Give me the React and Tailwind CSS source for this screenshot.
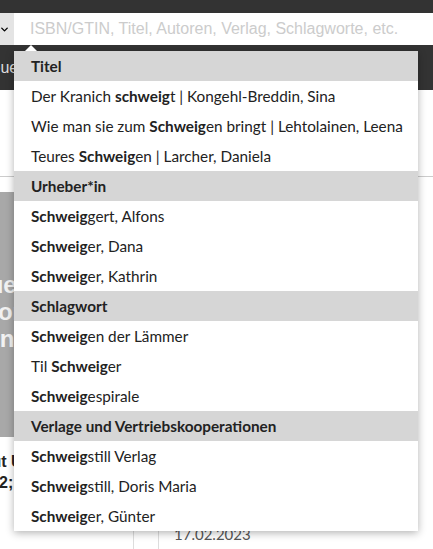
import { ChevronDown } from 'lucide-react';

const groups = [
  {
    title: 'Titel',
    items: [
      ['Der Kranich ', 'schweig', 't | Kongehl-Breddin, Sina'],
      ['Wie man sie zum ', 'Schweig', 'en bringt | Lehtolainen, Leena'],
      ['Teures ', 'Schweig', 'en | Larcher, Daniela'],
    ],
  },
  {
    title: 'Urheber*in',
    items: [
      ['', 'Schweig', 'gert, Alfons'],
      ['', 'Schweig', 'er, Dana'],
      ['', 'Schweig', 'er, Kathrin'],
    ],
  },
  {
    title: 'Schlagwort',
    items: [
      ['', 'Schweig', 'en der Lämmer'],
      ['Til ', 'Schweig', 'er'],
      ['', 'Schweig', 'espirale'],
    ],
  },
  {
    title: 'Verlage und Vertriebskooperationen',
    items: [
      ['', 'Schweig', 'still Verlag'],
      ['', 'Schweig', 'still, Doris Maria'],
      ['', 'Schweig', 'er, Günter'],
    ],
  },
];

function Suggestions() {
  return (
    <div className="absolute left-[14px] top-[51px] w-[404px] bg-white shadow-[0_2px_8px_rgba(0,0,0,0.3)] font-['Lato',sans-serif] text-[15.3px] text-[#222]">
      <div className="absolute -top-[6px] left-[11px] w-0 h-0 border-x-[6px] border-x-transparent border-b-[6px] border-b-white" />
      {groups.map((g) => (
        <div key={g.title}>
          <div className="h-[30px] leading-[30px] pl-[17px] bg-[#d6d6d6] font-bold">{g.title}</div>
          {g.items.map(([pre, hit, post], i) => (
            <div key={i} className="h-[30px] leading-[30px] pl-[17px] whitespace-pre">
              {pre}
              <b className="font-bold">{hit}</b>
              {post}
            </div>
          ))}
        </div>
      ))}
    </div>
  );
}

export default function App() {
  return (
    <div className="relative w-[433px] h-[549px] overflow-hidden bg-white font-['Liberation_Sans',sans-serif]">
      <div className="h-[13px] bg-[#333]" />
      <div className="h-[32px] flex">
        <div className="w-[14px] bg-[#e4e4e4] flex items-center justify-start">
          <ChevronDown className="w-[11px] h-[11px] -ml-[1px]" strokeWidth={3} />
        </div>
        <div className="flex-1 flex items-center pl-[16px] text-[16px] text-[#ccc] whitespace-nowrap">
          ISBN/GTIN, Titel, Autoren, Verlag, Schlagworte, etc.
        </div>
      </div>
      <div className="h-[45px] bg-[#333] flex items-center text-[#ddd] text-[16px] whitespace-nowrap">
        <span className="-ml-[20px]">Neuerscheinungen</span>
      </div>
      <div className="h-[87px] border-b border-[#ccc]" />
      <div className="pt-[15px] flex">
        <div className="w-[200px] h-[245px] bg-[#a8a8a8] flex flex-col justify-end pb-[85px] text-[#f2f2f2] font-bold text-[24px] leading-[27px] whitespace-nowrap">
          <span className="-ml-[42px]">Neue</span>
          <span className="-ml-[15px]">Ton</span>
          <span className="-ml-[15px]">und</span>
        </div>
      </div>
      <div className="pt-[14px] text-[16px] leading-[21px] text-[#222] font-bold whitespace-nowrap">
        <div className="-ml-[21px]">Gut Unterwegs</div>
        <div className="-ml-[1px]">2; 15</div>
      </div>
      <div className="flex mt-[29px] h-[40px]">
        <div className="w-[133px]" />
        <div className="w-[25px] border-l border-[#ddd]" />
        <div className="border-l border-[#ddd] pl-[15px] pt-[1px] text-[15px] text-[#555] font-['Lato',sans-serif]">17.02.2023</div>
      </div>
      <Suggestions />
    </div>
  );
}
